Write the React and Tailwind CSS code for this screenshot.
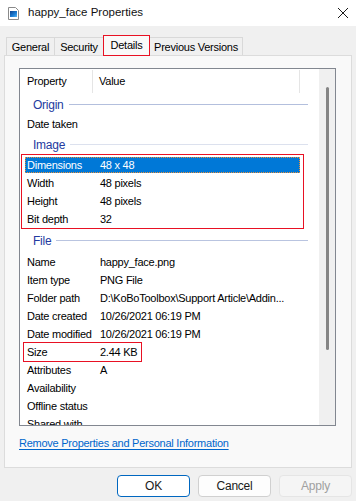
const font = "font-['Liberation_Sans','Arial',sans-serif]";

const FileIcon = () => (
  <svg width="11" height="13" viewBox="0 0 11 13">
    <path d="M0.5 0.5 H7.5 L10.5 3.5 V12.5 H0.5 Z" fill="#fff" stroke="#8a8a8a" />
    <defs>
      <linearGradient id="pic" x1="0" y1="0" x2="1" y2="1">
        <stop offset="0" stopColor="#0a3f8c" />
        <stop offset="0.6" stopColor="#1c7fd6" />
        <stop offset="1" stopColor="#59b6f0" />
      </linearGradient>
    </defs>
    <rect x="2" y="4" width="7" height="6" fill="url(#pic)" />
  </svg>
);

const CloseIcon = () => (
  <svg width="12" height="12" viewBox="0 0 12 12">
    <path d="M1 1 L11 11 M11 1 L1 11" stroke="#1a1a1a" strokeWidth="1" />
  </svg>
);

const Tab = ({ label, w, active }) =>
  active ? (
    <div
      className={`relative z-10 -ml-px -mb-px h-[21px] ${w} border border-[#e81123] bg-[#f9f9f9] flex items-center justify-center pb-[1px]`}
    >
      {label}
    </div>
  ) : (
    <div
      className={`-ml-px first:ml-0 h-[18px] ${w} border border-[#d9d9d9] border-b-0 bg-[#f0f0f0] flex items-center justify-center pt-[1px]`}
    >
      {label}
    </div>
  );

const Group = ({ label, h, line }) => (
  <div className={`flex items-center shrink-0 ${h} pl-[13px] pr-[11px]`}>
    <span className="text-[#233aa0] text-[12px]">{label}</span>
    <div className={`flex-1 h-px ml-[5px] ${line}`} />
  </div>
);

const Row = ({ name, value }) => (
  <div className="flex items-center shrink-0 h-[18px]">
    <span className="w-[80px] pl-[7px] whitespace-nowrap">{name}</span>
    <span className="whitespace-nowrap">{value}</span>
  </div>
);

export default function App() {
  return (
    <div className={`w-[356px] h-[501px] bg-[#f0f0f0] flex flex-col overflow-hidden text-[11px] tracking-[-0.25px] text-black ${font}`}>
      {/* title bar */}
      <div className="h-[26px] bg-white flex items-center pl-[8px] pr-[7px] shrink-0">
        <FileIcon />
        <span className="ml-[9px] text-[11.5px] tracking-normal text-[#111]">happy_face Properties</span>
        <div className="ml-auto">
          <CloseIcon />
        </div>
      </div>

      <div className="pl-[4px] pt-[8px] shrink-0">
        {/* tabs */}
        <div className="flex items-end pl-[2px] h-[21px]">
          <Tab label="General" w="w-[49px]" />
          <Tab label="Security" w="w-[50px]" />
          <Tab label="Details" w="w-[47px]" active />
          <Tab label="Previous Versions" w="w-[94px]" />
        </div>

        {/* panel */}
        <div className="w-[348px] h-[413px] border border-[#dcdcdc] bg-[#f9f9f9] pl-[14px] pt-[12px]">
          <div className="w-[317px] h-[358px] border border-[#828790] bg-white flex overflow-hidden">
            <div className="flex-1 flex flex-col overflow-hidden">
              {/* header */}
              <div className="flex items-center h-[25px] shrink-0">
                <div className="w-[73px] h-[23px] pl-[7px] flex items-center border-r border-[#e5e5e5]">Property</div>
                <div className="w-[207px] h-[23px] pl-[6px] flex items-center border-r border-[#e5e5e5]">Value</div>
              </div>

              <Group label="Origin" h="h-[21px]" line="bg-[#b3bfdd]" />
              <Row name="Date taken" value="" />
              <Group label="Image" h="h-[23px]" line="bg-[#dce1ee]" />

              <div className="relative shrink-0">
                <div className="flex items-center h-[18px]">
                  <div className="ml-[5px] w-[275px] h-[16px] bg-[#0078d7] border border-dotted border-[#e8903a] flex items-center text-white">
                    <span className="w-[74px] pl-[1px]">Dimensions</span>
                    <span>48 x 48</span>
                  </div>
                </div>
                <Row name="Width" value="48 pixels" />
                <Row name="Height" value="48 pixels" />
                <Row name="Bit depth" value="32" />
                <div className="absolute z-10 pointer-events-none -top-[2px] -bottom-[1px] left-[1px] w-[283px] border border-[#e81123]" />
              </div>

              <Group label="File" h="h-[25px]" line="bg-[#b9c4e0]" />
              <Row name="Name" value="happy_face.png" />
              <Row name="Item type" value="PNG File" />
              <Row name="Folder path" value="D:\KoBoToolbox\Support Article\Addin..." />
              <Row name="Date created" value="10/26/2021 06:19 PM" />
              <Row name="Date modified" value="10/26/2021 06:19 PM" />
              <div className="relative shrink-0">
                <Row name="Size" value="2.44 KB" />
                <div className="absolute z-10 pointer-events-none -top-px -bottom-px left-[3px] w-[119px] border border-[#e81123]" />
              </div>
              <Row name="Attributes" value="A" />
              <Row name="Availability" value="" />
              <Row name="Offline status" value="" />
              <Row name="Shared with" value="" />
            </div>

            {/* scrollbar */}
            <div className="w-[16px] shrink-0 bg-[#f0f0f0] flex justify-center pt-[18px]">
              <div className="w-[3px] h-[263px] rounded-full bg-[#858585]" />
            </div>
          </div>

          <div className="mt-[9px]">
            <span className="text-[#0066cc] underline underline-offset-2">Remove Properties and Personal Information</span>
          </div>
        </div>
      </div>

      {/* buttons */}
      <div className="flex justify-end gap-[8px] pr-[4px] pt-[7px]">
        <button className="w-[73px] h-[22px] rounded-[4px] border border-[#0067c0] bg-white text-[12px] text-[#1a1a1a]">OK</button>
        <button className="w-[73px] h-[22px] rounded-[4px] border border-[#d0d0d0] bg-[#fdfdfd] text-[12px] text-[#1a1a1a]">Cancel</button>
        <button className="w-[73px] h-[22px] rounded-[4px] border border-[#e5e5e5] bg-[#f5f5f5] text-[12px] text-[#a0a0a0]">Apply</button>
      </div>
    </div>
  );
}
